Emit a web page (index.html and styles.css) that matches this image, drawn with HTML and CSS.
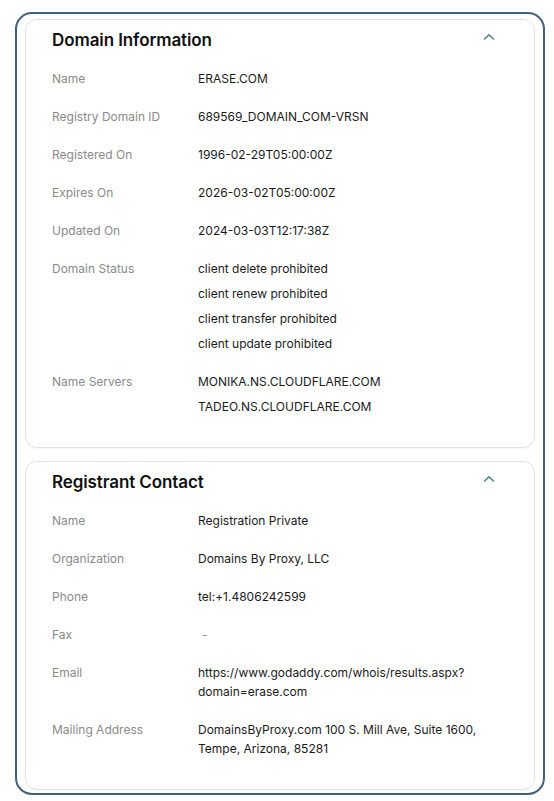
FILE: index.html
```html
<!DOCTYPE html>
<html>
<head>
<meta charset="utf-8">
<link rel="stylesheet" href="styles.css">
</head>
<body>
<div class="frame">
  <section class="card">
    <div class="card-head">
      <h2 class="card-title">Domain Information</h2>
      <svg class="chev" width="12" height="8" viewBox="0 0 12 8"><path d="M1.5 6 L6 1.8 L10.5 6" fill="none" stroke="#4f8a8b" stroke-width="1.6" stroke-linecap="round" stroke-linejoin="round"/></svg>
    </div>
    <div class="row"><div class="label">Name</div><div class="value"><div>ERASE.COM</div></div></div>
    <div class="row"><div class="label">Registry Domain ID</div><div class="value"><div>689569_DOMAIN_COM-VRSN</div></div></div>
    <div class="row"><div class="label">Registered On</div><div class="value"><div>1996-02-29T05:00:00Z</div></div></div>
    <div class="row"><div class="label">Expires On</div><div class="value"><div>2026-03-02T05:00:00Z</div></div></div>
    <div class="row"><div class="label">Updated On</div><div class="value"><div>2024-03-03T12:17:38Z</div></div></div>
    <div class="row"><div class="label">Domain Status</div><div class="value">
      <div>client delete prohibited</div>
      <div>client renew prohibited</div>
      <div>client transfer prohibited</div>
      <div>client update prohibited</div>
    </div></div>
    <div class="row"><div class="label">Name Servers</div><div class="value">
      <div>MONIKA.NS.CLOUDFLARE.COM</div>
      <div>TADEO.NS.CLOUDFLARE.COM</div>
    </div></div>
  </section>
  <section class="card">
    <div class="card-head">
      <h2 class="card-title">Registrant Contact</h2>
      <svg class="chev" width="12" height="8" viewBox="0 0 12 8"><path d="M1.5 6 L6 1.8 L10.5 6" fill="none" stroke="#4f8a8b" stroke-width="1.6" stroke-linecap="round" stroke-linejoin="round"/></svg>
    </div>
    <div class="row"><div class="label">Name</div><div class="value"><div>Registration Private</div></div></div>
    <div class="row"><div class="label">Organization</div><div class="value"><div>Domains By Proxy, LLC</div></div></div>
    <div class="row"><div class="label">Phone</div><div class="value"><div>tel:+1.4806242599</div></div></div>
    <div class="row"><div class="label">Fax</div><div class="value"><div class="dash">-</div></div></div>
    <div class="row"><div class="label">Email</div><div class="value"><div>https://www.godaddy.com/whois/results.aspx?<wbr>domain=erase.com</div></div></div>
    <div class="row"><div class="label">Mailing Address</div><div class="value"><div>DomainsByProxy.com 100 S. Mill Ave, Suite 1600, Tempe, Arizona, 85281</div></div></div>
  </section>
</div>
</body>
</html>
```
FILE: styles.css
```css
* { box-sizing: border-box; }
html, body { margin: 0; padding: 0; background: #ffffff; }
body {
  font-family: Inter, "Noto Sans", "Liberation Sans", sans-serif;
  color: #1f1f1f;
  padding: 12px 9px 6px 15px;
}
.frame {
  border: 2px solid #41617d;
  border-radius: 17px;
  padding: 5px 8px 3px 8px;
  display: flex;
  flex-direction: column;
  gap: 13px;
}
.card {
  border: 1px solid #e3e3e3;
  border-radius: 12px;
  padding: 0 24px 22px 26px;
  box-shadow: 0 1px 2px rgba(0,0,0,0.04);
}
.card-head {
  height: 39px;
  display: flex;
  align-items: center;
  justify-content: space-between;
  padding-right: 15px;
}
.card-title {
  margin: 0;
  font-size: 17px;
  font-weight: 600;
  color: #111111;
  letter-spacing: -0.1px;
}
.chev { display: block; margin-top: -5px; }
.row {
  display: grid;
  grid-template-columns: 146px 1fr;
  padding: 9.5px 0;
  line-height: 19px;
  font-size: 12px;
}
.label { color: #8a8a8a; }
.value {
  color: #1a1a1a;
  display: flex;
  flex-direction: column;
  gap: 6px;
  padding-right: 30px;
}
.dash { color: #999999; padding-left: 4px; }
```
